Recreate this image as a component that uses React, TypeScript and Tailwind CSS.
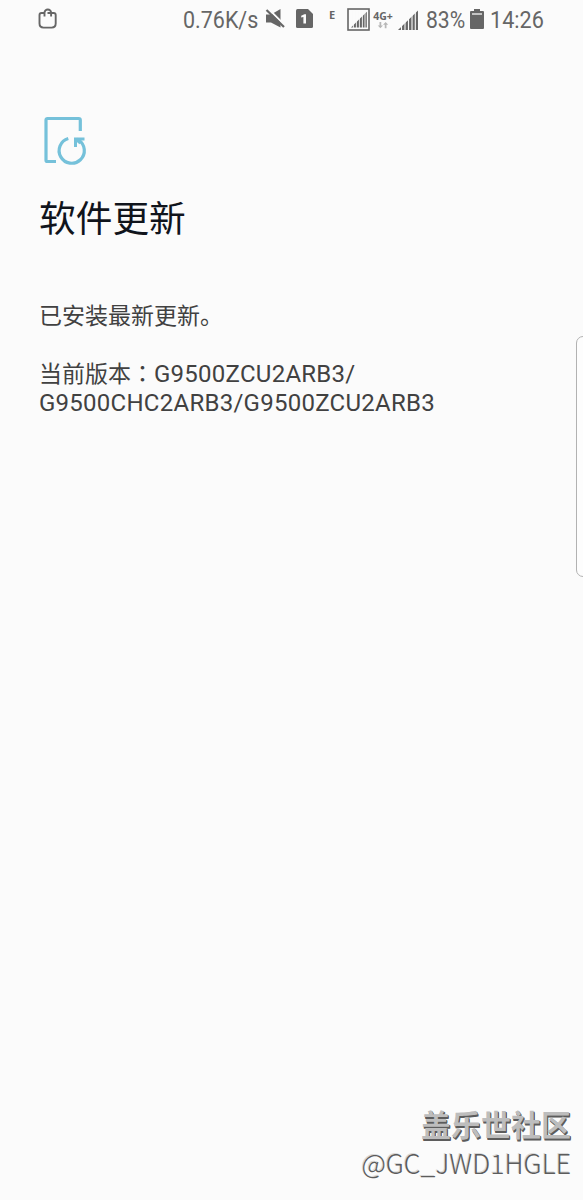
import React from 'react';

const App = () => {
    return (
        <div className="w-full h-[1200px] flex flex-col relative overflow-hidden bg-[#fbfbfb] font-['Roboto','Noto_Sans_CJK_SC',sans-serif]">
            <StatusBar />

            <main className="flex-1 pl-[39px] pt-[74px]">
                <UpdateIcon />
                <h1 className="mt-[26px] text-[36.7px] leading-[54px] text-[#10141c] whitespace-nowrap">
                    软件更新
                </h1>
                <div className="mt-[55px] text-[23px] leading-[29px] text-[#414141] whitespace-nowrap">
                    <p>已安装最新更新。</p>
                    <p className="mt-[27px]">
                        当前版本
                        <span className="font-['Noto_Sans_CJK_TC',sans-serif]" lang="zh-TW">：</span>
                        <Version text="G9500ZCU2ARB3/" />
                    </p>
                    <p>
                        <Version text="G9500CHC2ARB3/G9500ZCU2ARB3" />
                    </p>
                </div>
            </main>

            <footer className="flex flex-col items-end pr-[12px] pb-[18px] whitespace-nowrap">
                <span className="text-[30px] leading-[40px] font-bold text-[#bdbdbd] [text-shadow:1px_1px_0_#5c5c5c,1px_2px_0_#5c5c5c] font-['Noto_Sans_CJK_SC',sans-serif]">
                    盖乐世社区
                </span>
                <span className="mt-px text-[26.8px] leading-[38px] text-[#5c5c5c] [text-shadow:-1px_-1px_0_#d8d8d8] font-['Noto_Sans_CJK_SC',sans-serif] font-light">
                    @GC_JWD1HGLE
                </span>
            </footer>

            {/* edge panel handle */}
            <div className="absolute top-[336px] left-[576px] w-[16px] h-[241px] rounded-[7px] border border-[#b2b2b2] bg-[#fdfdfd]" />
        </div>
    );
};

export default App;

// version string
const Version = ({ text }: { text: string }) => {
    return <span className="text-[24px] tracking-[0.26px]">{text}</span>;
};

// status bar
const StatusBar = () => {
    return (
        <header className="h-[40px] shrink-0 flex items-center pl-[37px] text-[#666666]">
            <svg width="22" height="24" viewBox="0 0 22 24" className="-mt-[2px]" fill="none" stroke="currentColor" strokeWidth="1.9">
                <path d="M7.5 6H4.5q-2 0-2 2v8.6q0 4 4 4h8.2q4 0 4-4V8q0-2-2-2H10.5" />
                <path d="M7.5 9.5V5.8a3.3 3.3 0 0 1 6.6 0V9.5" />
            </svg>

            <StatusText className="ml-[123.5px] w-[76px] scale-x-[.895]" text="0.76K/s" />

            <svg width="22" height="22" viewBox="0 0 22 22" className="ml-[6.5px] -mt-[2px]" fill="currentColor">
                <path d="M1 6.5h5L15.5 1v18.5L6 14.5H1z" />
                <path d="M3.5 1l17 17" stroke="#fbfbfb" strokeWidth="2" />
                <path d="M1.5 2l17.5 17" stroke="currentColor" strokeWidth="2.2" />
            </svg>

            <svg width="17" height="20" viewBox="0 0 17 20" className="ml-[9px] -mt-[2px]" fill="currentColor">
                <path d="M1.5 0H12l5 5v12.5q0 1.5-1.5 1.5h-14Q0 19 0 17.5v-16Q0 0 1.5 0z" />
                <path d="M5.2 6.7l3.2-1.5h1.6v9.3H7.4V7.9l-2.2.7z" fill="#fbfbfb" />
            </svg>

            <span className="ml-[16px] w-[9px] mb-[10px] text-[11px] leading-[12px] font-bold font-['Open_Sans',sans-serif]">
                E
            </span>

            <svg width="23" height="23" viewBox="0 0 23 23" className="ml-[9px] -mt-[2px]" fill="none" stroke="currentColor">
                <rect x="1" y="1" width="21" height="21" strokeWidth="1.6" />
                <path d="M4 19.5L19.8 3.7V19.5z" fill="currentColor" stroke="none" />
                <path d="M6.4 20V3M9.4 20V3M12.4 20V3M15.4 20V3M18 20V3" stroke="#fbfbfb" strokeWidth=".9" />
            </svg>

            <div className="ml-[3px] w-[20px] flex flex-col items-center -mt-[2px]">
                <span className="text-[10.5px] leading-[12px] font-bold whitespace-nowrap font-['Open_Sans',sans-serif]">
                    4G+
                </span>
                <svg width="12" height="7" viewBox="0 0 12 8" fill="#b7b7b7">
                    <path d="M2 0h2v4h2L3 7 0 4h2zM8 7V3H6l3-3 3 3h-2v4z" />
                </svg>
            </div>

            <svg width="22" height="22" viewBox="0 0 22 22" className="ml-[5px] -mt-[1px]">
                <path d="M0 21L20 1.5V21z" fill="currentColor" />
                <path d="M3.5 22V0M7 22V0M10.5 22V0M14 22V0M17.3 22V0" stroke="#fbfbfb" strokeWidth="1.1" />
            </svg>

            <StatusText className="ml-[6px] w-[41px] scale-x-[.88]" text="83%" />

            <svg width="14" height="21" viewBox="0 0 14 21" className="ml-[3px] -mt-[1px]" fill="currentColor">
                <path d="M4 0h6v2h3q1 0 1 1v16q0 1-1 1H1q-1 0-1-1V3q0-1 1-1h3z" />
                <path d="M2 4h10v2H2z" fill="#c4c4c4" />
            </svg>

            <StatusText className="ml-[6px] w-[56px] scale-x-[.9]" text="14:26" />
        </header>
    );
};

// condensed status text
const StatusText = ({ text, className }: { text: string; className: string }) => {
    return (
        <span className={`block origin-left whitespace-nowrap text-[24px] leading-[40px] ${className}`}>
            {text}
        </span>
    );
};

// device outline with a refresh arrow
const UpdateIcon = () => {
    return (
        <svg width="50" height="53" viewBox="0 0 50 53" fill="none" stroke="#75c1da" strokeWidth="3.2">
            <path d="M17 47.5H8.6q-1.6 0-1.6-1.6V6.1Q7 4.5 8.6 4.5H39.7q1.6 0 1.6 1.6V17" />
            <path d="M29.3 24.5a12.6 12.6 0 1 0 10.2 1.5" />
            <path d="M36.5 33V25H45.5" strokeWidth="3" />
            <path d="M37 25l4.5 4" />
        </svg>
    );
};
